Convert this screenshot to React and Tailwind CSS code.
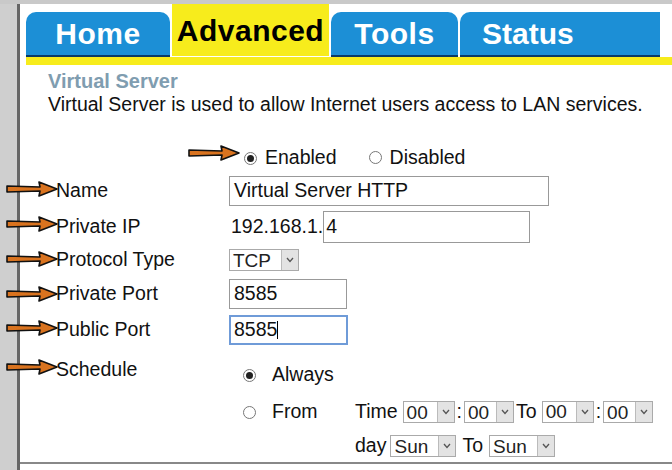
import React from "react";

const F = { fontFamily: '"Liberation Sans", Arial, sans-serif' };

function Arrow({ top, left = 6 }) {
  return (
    <svg className="absolute" style={{ top, left }} width="52" height="16" viewBox="0 0 52 16">
      <path d="M1 5 L34 6 L33 1 L51 8 L33 15 L34 10 L1 11 Z" fill="#d9731f" stroke="#111" strokeWidth="1.6" strokeLinejoin="round" />
    </svg>
  );
}

function Sel({ v, w }) {
  return (
    <span className={`inline-flex items-center h-[22px] border border-[#aaa] bg-white ${w}`}>
      <span className="flex-1 pl-[3px] text-[19px] leading-none text-[#222]">{v}</span>
      <span className="w-[17px] h-[20px] bg-[#e3e3e3] border-l border-[#bbb] flex items-center justify-center">
        <svg width="8" height="6" viewBox="0 0 8 6"><path d="M1 1 L4 4.5 L7 1" stroke="#555" strokeWidth="1.3" fill="none" /></svg>
      </span>
    </span>
  );
}

function Radio({ on }) {
  return (
    <span className="inline-flex w-[13px] h-[13px] rounded-full border border-[#777] bg-white items-center justify-center">
      {on && <span className="w-[7px] h-[7px] rounded-full bg-[#222]" />}
    </span>
  );
}

function Tab({ label, active, w }) {
  return (
    <div className={`${w} shrink-0 ${active ? "h-[52px] bg-[#f7ec1c] text-black" : "h-[45px] mt-[8px] bg-[#1c8fd6] text-white rounded-t-[10px] border-b-2 border-[#0a3a66]"} flex items-center justify-center text-[30px] font-bold tracking-[0.5px]`}>
      {label}
    </div>
  );
}

export default function App() {
  return (
    <div style={F} className="relative w-[672px] h-[470px] bg-white overflow-hidden text-[#111]">
      <div className="flex h-full border-t-[4px] border-[#c9c9c9]">
        <div className="w-[20px] bg-[#cfcfcf] border-r-[3px] border-[#666] shrink-0" />
        <div className="flex-1 min-w-0 flex flex-col border-b-2 border-[#888] mb-[6px]">
          <div className="flex items-start pl-[6px] gap-[2px] overflow-hidden">
            <Tab label="Home" w="w-[144px]" />
            <Tab label="Advanced" active w="w-[157px]" />
            <Tab label="Tools" w="w-[127px]" />
            <div className="shrink-0 w-[200px] h-[45px] mt-[8px] bg-[#1c8fd6] text-white rounded-tl-[10px] border-b-2 border-[#0a3a66] flex items-center pl-[22px] text-[30px] font-bold">Status</div>
          </div>
          <div className="h-[8px] bg-[#f7ec1c] ml-[6px]" />
          <div className="pl-[28px] pt-[4px] text-[20px] font-bold text-[#7f9db0] leading-[24px]">Virtual Server</div>
          <div className="pl-[28px] text-[19.5px] leading-[22px] whitespace-nowrap">Virtual Server is used to allow Internet users access to LAN services.</div>
          <div className="relative flex-1 text-[19.5px]">
            <Arrow top={30} left={168} />
            <div className="flex items-center gap-[8px] pl-[224px] mt-[31px] h-[24px]">
              <Radio on /><span>Enabled</span>
              <span className="ml-[24px]"><Radio /></span><span>Disabled</span>
            </div>
            <Arrow top={66} left={-14} />
            <div className="flex items-center h-[30px] mt-[6px]">
              <span className="w-[209px] pl-[36px]">Name</span>
              <span className="w-[320px] h-[30px] border border-[#999] flex items-center pl-[4px]">Virtual Server HTTP</span>
            </div>
            <Arrow top={101} left={-14} />
            <div className="flex items-center h-[32px] mt-[5px]">
              <span className="w-[211px] pl-[36px]">Private IP</span>
              <span>192.168.1.</span>
              <span className="w-[207px] h-[32px] border border-[#999] flex items-center pl-[2px]">4</span>
            </div>
            <Arrow top={136} left={-14} />
            <div className="flex items-center h-[22px] mt-[6px]">
              <span className="w-[209px] pl-[36px]">Protocol Type</span>
              <Sel v="TCP" w="w-[70px]" />
            </div>
            <Arrow top={171} left={-14} />
            <div className="flex items-center h-[30px] mt-[8px]">
              <span className="w-[209px] pl-[36px]">Private Port</span>
              <span className="w-[118px] h-[30px] border border-[#999] flex items-center pl-[4px]">8585</span>
            </div>
            <Arrow top={205} left={-14} />
            <div className="flex items-center h-[30px] mt-[6px]">
              <span className="w-[209px] pl-[36px]">Public Port</span>
              <span className="w-[119px] h-[30px] border-2 border-[#6f9bd8] flex items-center pl-[3px]">8585<span className="w-px h-[18px] bg-black" /></span>
            </div>
            <Arrow top={244} left={-14} />
            <div className="flex items-start mt-[13px]">
              <span className="w-[223px] pl-[36px] leading-[22px]">Schedule</span>
              <div className="flex flex-col">
                <div className="flex items-center gap-[16px] h-[24px] mt-[5px]"><Radio on /><span>Always</span></div>
                <div className="flex items-start mt-[13px]">
                  <div className="flex items-center gap-[16px] h-[24px] w-[112px]"><Radio /><span>From</span></div>
                  <div className="flex flex-col gap-[10px]">
                    <div className="flex items-center gap-[2px] h-[24px]">
                      <span className="mr-[3px]">Time</span><Sel v="00" w="w-[52px]" />:<Sel v="00" w="w-[50px]" /><span>To</span>
                      <span className="ml-[3px]"><Sel v="00" w="w-[52px]" /></span>:<Sel v="00" w="w-[50px]" />
                    </div>
                    <div className="flex items-center gap-[4px] h-[24px]">
                      <span>day</span><Sel v="Sun" w="w-[66px]" /><span className="mx-[2px]">To</span><Sel v="Sun" w="w-[66px]" />
                    </div>
                  </div>
                </div>
              </div>
            </div>
          </div>
        </div>
      </div>
    </div>
  );
}
